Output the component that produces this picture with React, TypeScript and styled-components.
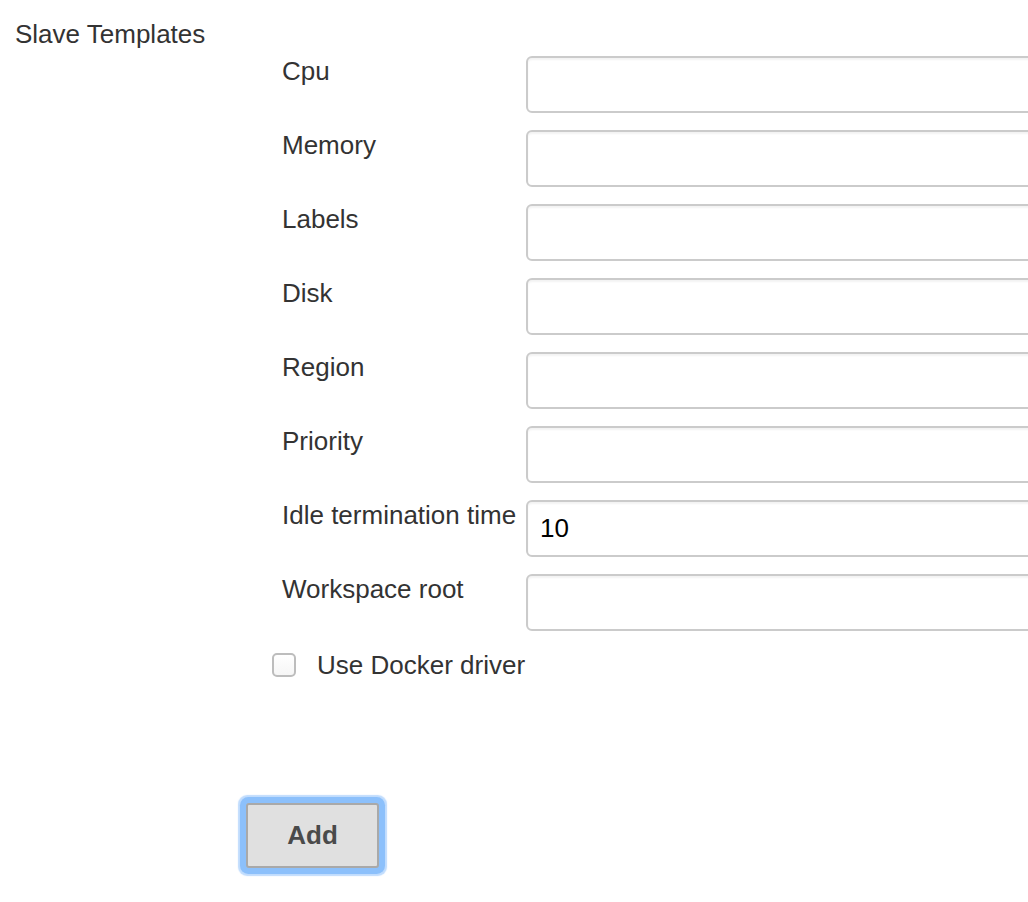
import React from "react";
import styled, { createGlobalStyle } from "styled-components";

const Global = createGlobalStyle`
  html, body {
    margin: 0;
    padding: 0;
    background: #fff;
    overflow: hidden;
  }
  body {
    font-family: "Liberation Sans", Arial, Helvetica, sans-serif;
    font-size: 26px;
    line-height: 30px;
    color: #333;
  }
`;

const Page = styled.div`
  width: 1028px;
  height: 902px;
  overflow: hidden;
  padding-top: 19px;
  box-sizing: border-box;
`;

const SectionTitle = styled.div`
  padding-left: 15px;
  height: 30px;
  color: #333;
`;

const Section = styled.div`
  margin-left: 281px;
  margin-top: 7px;
  display: flex;
  flex-direction: column;
`;

const FieldGrid = styled.div`
  display: grid;
  grid-template-columns: 245px 700px;
  row-gap: 17px;
`;

const Label = styled.label`
  padding-left: 1px;
  color: #333;
  white-space: nowrap;
`;

const TextInput = styled.input`
  box-sizing: border-box;
  height: 57px;
  width: 100%;
  border: 2px solid #cbcbcb;
  border-radius: 6px;
  padding: 0 12px;
  font-family: "Liberation Sans", Arial, sans-serif;
  font-size: 26px;
  color: #000;
  background: #fff;
  box-shadow: inset 0 2px 2px rgba(0, 0, 0, 0.05);
  outline: none;
`;

const CheckRow = styled.label`
  display: flex;
  align-items: center;
  gap: 21px;
  margin-left: -9px;
  margin-top: 19px;
  height: 30px;
  color: #333;
`;

const CheckBox = styled.input`
  appearance: none;
  -webkit-appearance: none;
  margin: 0;
  width: 24px;
  height: 24px;
  box-sizing: border-box;
  border: 2px solid #bdbdbd;
  border-radius: 5px;
  background: linear-gradient(#fff, #f6f6f6);
`;

const ButtonWrap = styled.div`
  margin-top: 123px;
  margin-left: -35px;
`;

const AddButton = styled.button`
  box-sizing: border-box;
  width: 133px;
  height: 65px;
  background: #e0e0e0;
  border: 2px solid #a9a9a9;
  border-radius: 3px;
  font-family: "Liberation Sans", Arial, sans-serif;
  font-size: 26px;
  font-weight: bold;
  color: #4a4a4a;
  padding: 0;
  box-shadow: 0 0 0 6px #8cc0fb, 0 0 1px 8px rgba(140, 192, 251, 0.55);
  cursor: pointer;
`;

const fields: { label: string; value?: string }[] = [
  { label: "Cpu" },
  { label: "Memory" },
  { label: "Labels" },
  { label: "Disk" },
  { label: "Region" },
  { label: "Priority" },
  { label: "Idle termination time", value: "10" },
  { label: "Workspace root" },
];

export default function App() {
  return (
    <>
      <Global />
      <Page>
        <SectionTitle>Slave Templates</SectionTitle>
        <Section>
          <FieldGrid>
            {fields.map((f) => (
              <React.Fragment key={f.label}>
                <Label>{f.label}</Label>
                <TextInput type="text" defaultValue={f.value ?? ""} />
              </React.Fragment>
            ))}
          </FieldGrid>
          <CheckRow>
            <CheckBox type="checkbox" />
            <span>Use Docker driver</span>
          </CheckRow>
          <ButtonWrap>
            <AddButton type="button">Add</AddButton>
          </ButtonWrap>
        </Section>
      </Page>
    </>
  );
}
